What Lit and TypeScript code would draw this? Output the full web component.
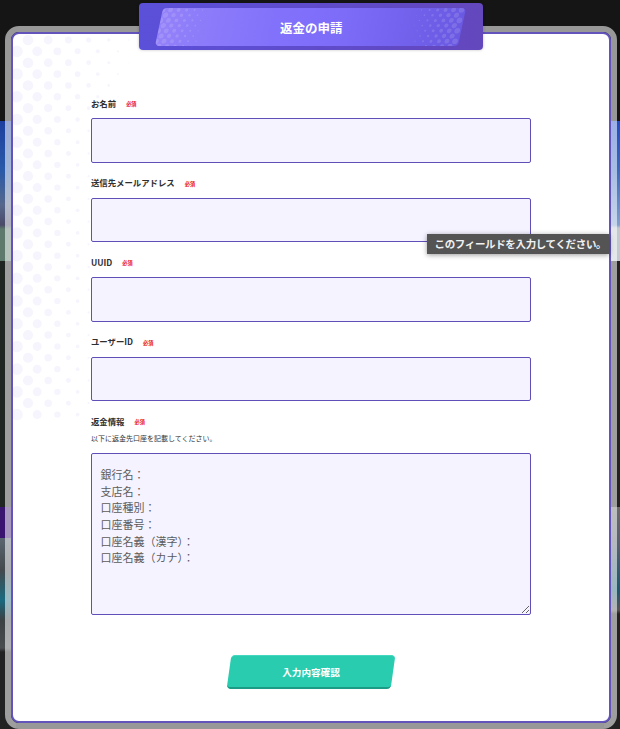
import { LitElement, html, css, svg } from "lit";
import { customElement } from "lit/decorators.js";

const FONT = css`"Noto Sans CJK JP", "Noto Sans", sans-serif`;

function bgDots() {
  const out = [];
  for (let k = 0; k < 34; k++) {
    const y = 40 + 11.35 * k;
    const off = k % 2 === 0 ? 28 : 17;
    const reach = y < 90 ? 136 - (y - 40) * 0.2 : y < 135 ? 126 - (y - 90) * 0.6 : 100;
    for (let x = off; x < reach; x += 20.2) {
      const r = 5.4 * (1 - (x - 17) / (reach - 17)) + 0.4;
      out.push(svg`<circle cx=${x - 13} cy=${y - 34} r=${r.toFixed(2)}></circle>`);
    }
  }
  return out;
}

function plateDots(w: number, rightSide: boolean) {
  const out = [];
  for (let k = 0; k < 8; k++) {
    const y = 2 + 5.2 * k;
    for (let i = 0; i < 7; i++) {
      const d = i * 8 + (k % 2 ? 4 : 0);
      if (d > w) continue;
      const r = 2.5 * (1 - d / w) + 0.3;
      const x = rightSide ? w - d : d;
      out.push(svg`<circle cx=${x} cy=${y} r=${r.toFixed(2)}></circle>`);
    }
  }
  return out;
}

const BANK = "銀行名：\n支店名：\n口座種別：\n口座番号：\n口座名義（漢字）：\n口座名義（カナ）：";

@customElement("app-root")
export class AppRoot extends LitElement {
  static styles = css`
    :host {
      display: block;
      position: relative;
      height: 729px;
      overflow: hidden;
      font-family: ${FONT};
      background-color: #151515;
      background-repeat: no-repeat;
      background-size: 16px 100%, 16px 100%;
      background-position: left top, right top;
      background-image:
        linear-gradient(to bottom,
          #151515 0 121px, #1c3f9f 121px, #2a5aa8 170px, #56688c 205px, #4b4a68 225px,
          #5d7a6c 229px, #5d7a6c 261px, #222622 261px, #222622 507px,
          #3a1570 507px, #3a1570 538px, #5a6670 538px, #44494d 570px, #1a6a80 600px,
          #3c4144 620px, #4a4d50 648px, #222 652px, #222 729px),
        linear-gradient(to bottom,
          #151515 0 121px, #1e4cc8 121px, #3a6ac0 170px, #7fa0d0 225px,
          #c0c8d0 228px, #c0c8d0 261px, #222 261px, #222 507px,
          #6a6a6a 507px, #566070 545px, #1a5a70 590px, #555 610px, #222 614px, #222 729px);
    }
    .modal {
      box-sizing: border-box;
      position: relative;
      height: 703px;
      margin: 26px 3px 0 5px;
      border: 6px solid rgba(255, 255, 255, 0.56);
      border-radius: 14px;
      background-clip: padding-box;
    }
    .panel {
      box-sizing: border-box;
      position: relative;
      height: 100%;
      background: #fff;
      border: 2px solid #6254bb;
      border-radius: 8px;
    }
    .halftone {
      position: absolute;
      left: 0;
      top: 0;
      width: 130px;
      height: 388px;
      fill: #f6f5fe;
    }
    .title {
      box-sizing: border-box;
      position: relative;
      width: 344px;
      height: 47px;
      margin: -31px auto 0;
      padding: 5px 21px 4px 20px;
      border-radius: 4px;
      background: linear-gradient(90deg, #5b50d9, #6347bd);
      box-shadow: 0 0 3px rgba(0, 0, 0, 0.25);
    }
    .plate {
      position: relative;
      display: flex;
      align-items: center;
      justify-content: center;
      height: 38px;
      border-radius: 4px;
      overflow: hidden;
      transform: skewX(-12deg);
      background: linear-gradient(90deg, #9382f9 0%, #8171fb 40%, #7c6cf8 60%, #6a59e2 100%);
    }
    .plate span {
      margin-left: 1px;
      font-size: 12.5px;
      font-weight: 700;
      color: #fff;
      transform: skewX(12deg);
    }
    .plate svg {
      position: absolute;
      top: 0;
      height: 38px;
      fill: rgba(255, 255, 255, 0.13);
    }
    .plate svg.l { left: 0; width: 50px; }
    .plate svg.r { right: 0; width: 50px; }
    form {
      position: relative;
      padding: 46px 78px 0;
    }
    .field { margin-bottom: 13px; }
    .label {
      display: flex;
      align-items: center;
      gap: 10px;
      height: 13px;
      margin-bottom: 9px;
      font-size: 8.4px;
      font-weight: 700;
      color: #2f2f2f;
    }
    .req {
      margin-top: 2px;
      font-size: 5.2px;
      font-weight: 700;
      color: #e8102a;
    }
    .field.tight .label { margin-bottom: 5px; }
    .help {
      height: 12px;
      line-height: 12px;
      margin-bottom: 9px;
      font-size: 7px;
      color: #333;
    }
    input, textarea {
      display: block;
      box-sizing: border-box;
      width: 100%;
      margin: 0;
      background: #f5f3ff;
      border: 1px solid #5f4fb8;
      border-radius: 2px;
      outline: none;
    }
    input { height: 44.6px; }
    textarea {
      height: 162px;
      padding: 11.5px 8.5px;
      font-family: ${FONT};
      font-size: 11px;
      line-height: 16.67px;
      color: #5c5c5c;
    }
    .actions {
      display: flex;
      justify-content: center;
      margin-top: 40px;
    }
    button {
      box-sizing: border-box;
      width: 164px;
      height: 34px;
      padding: 0;
      font-family: ${FONT};
      color: #fff;
      font-size: 9.6px;
      font-weight: 700;
      background: #2accb0;
      border: 0;
      border-top: 1px solid #45d8bf;
      border-bottom: 2px solid #1b9c86;
      border-radius: 4px;
      transform: skewX(-8deg);
    }
    button span {
      display: block;
      transform: skewX(8deg);
    }
    .tip {
      position: absolute;
      left: 427px;
      top: 233.5px;
      box-sizing: border-box;
      width: 182px;
      height: 20px;
      padding-left: 7.5px;
      display: flex;
      align-items: center;
      background: #545454;
      color: #f2f2f2;
      font-size: 10.5px;
      font-weight: 700;
      letter-spacing: -0.35px;
      white-space: nowrap;
      box-shadow: 0 1px 5px rgba(0, 0, 0, 0.4);
    }
  `;

  private field(name: string) {
    return html`<div class="field">
      <div class="label">${name}<span class="req">必須</span></div>
      <input type="text" />
    </div>`;
  }

  render() {
    return html`
      <div class="modal">
        <div class="panel">
          <svg class="halftone" viewBox="0 0 130 388" aria-hidden="true">${bgDots()}</svg>
          <div class="title">
            <div class="plate">
              <svg class="l" viewBox="0 0 50 38" aria-hidden="true">${plateDots(46, false)}</svg>
              <svg class="r" viewBox="0 0 50 38" aria-hidden="true">${plateDots(46, true)}</svg>
              <span>返金の申請</span>
            </div>
          </div>
          <form novalidate>
            ${this.field("お名前")}
            ${this.field("送信先メールアドレス")}
            ${this.field("UUID")}
            ${this.field("ユーザーID")}
            <div class="field tight">
              <div class="label">返金情報<span class="req">必須</span></div>
              <div class="help">以下に返金先口座を記載してください。</div>
              <textarea .value=${BANK}></textarea>
            </div>
            <div class="actions">
              <button type="button"><span>入力内容確認</span></button>
            </div>
          </form>
        </div>
      </div>
      <div class="tip">このフィールドを入力してください。</div>
    `;
  }
}
